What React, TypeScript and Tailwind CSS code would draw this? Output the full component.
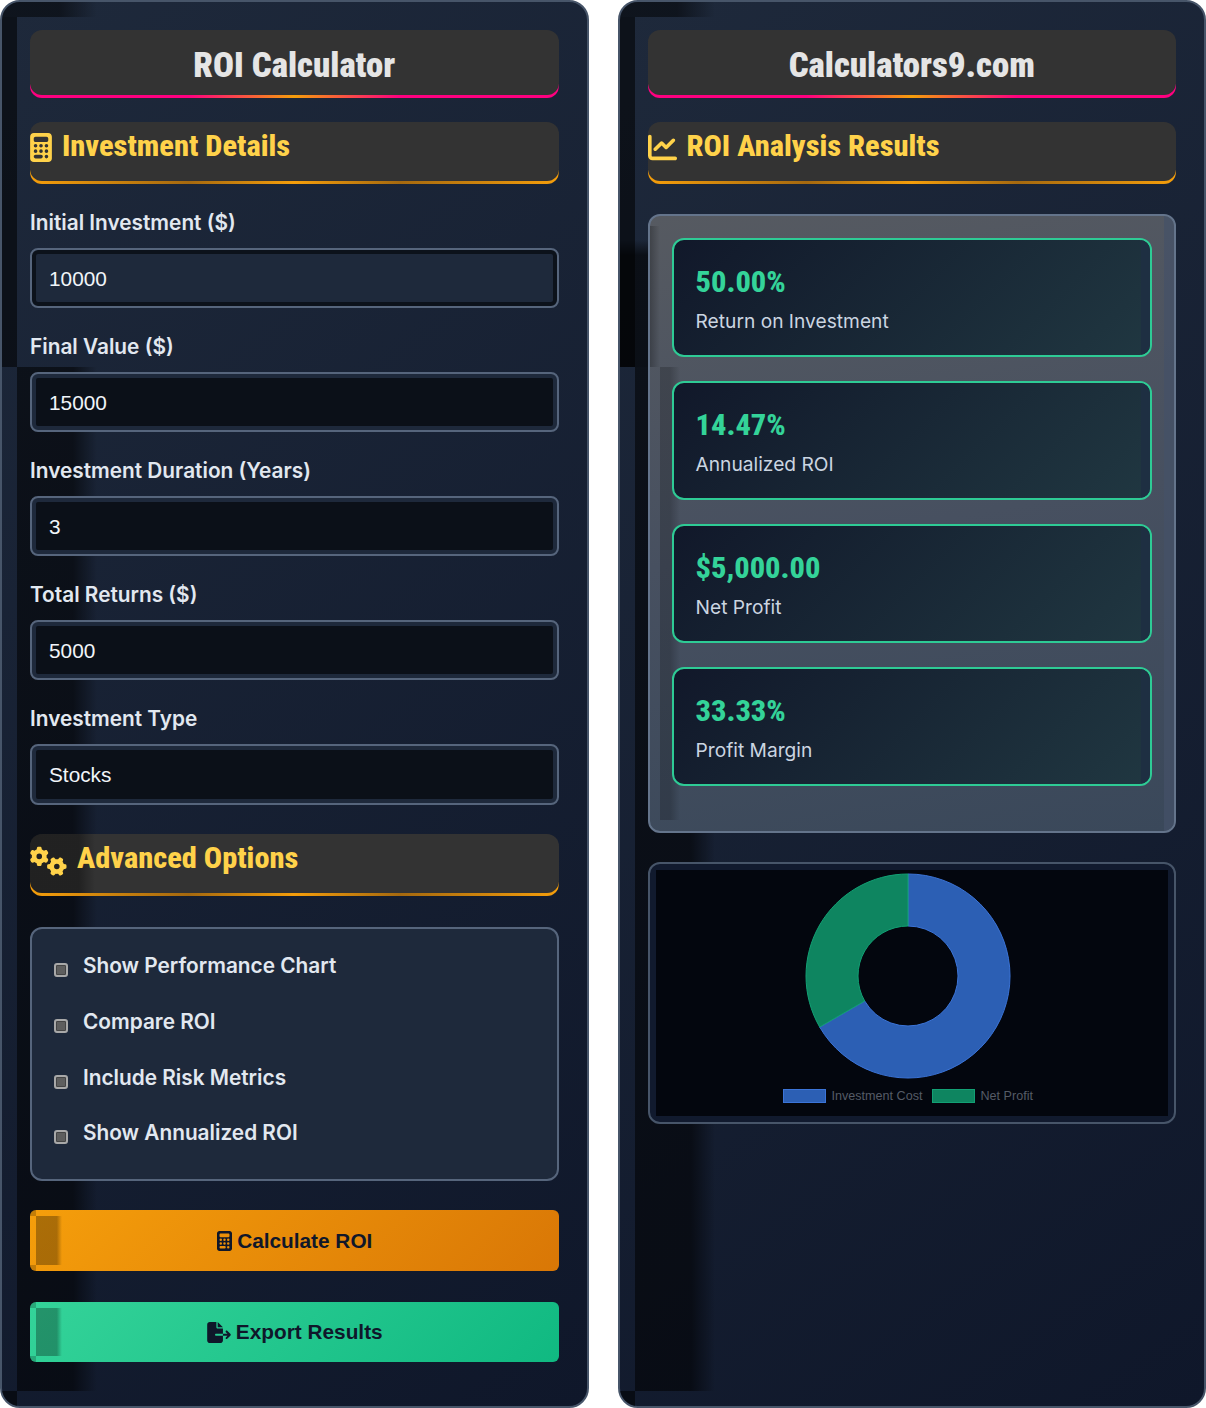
import type { ReactNode } from "react";
import { FaCalculator, FaChartLine, FaFileExport, FaGears } from "react-icons/fa6";

const fields = [
  { label: "Initial Investment ($)", value: "10000", first: true },
  { label: "Final Value ($)", value: "15000" },
  { label: "Investment Duration (Years)", value: "3" },
  { label: "Total Returns ($)", value: "5000" },
];

const options = ["Show Performance Chart", "Compare ROI", "Include Risk Metrics", "Show Annualized ROI"];

const results = [
  { value: "50.00%", label: "Return on Investment" },
  { value: "14.47%", label: "Annualized ROI" },
  { value: "$5,000.00", label: "Net Profit" },
  { value: "33.33%", label: "Profit Margin" },
];

const condensed = "font-['Roboto_Condensed',Roboto,sans-serif]";

// the odd dark inset shadow pieces of the original panels
function PanelShade() {
  return (
    <>
      <div className="pointer-events-none absolute left-0 top-0 h-[15px] w-[95px] bg-[linear-gradient(90deg,rgba(0,0,0,0.5)_60%,transparent)]" />
      <div className="pointer-events-none absolute left-0 top-[15px] h-[350px] w-[15px] bg-black/55" />
      <div className="pointer-events-none absolute bottom-[15px] left-[15px] top-[365px] w-[80px] bg-[linear-gradient(90deg,rgba(0,0,0,0.55)_70%,transparent)]" />
      <div className="pointer-events-none absolute bottom-0 left-0 h-[15px] w-[15px] bg-black/55" />
    </>
  );
}

function Panel({ children }: { children: ReactNode }) {
  return (
    <div className="relative overflow-hidden rounded-[20px] border-2 border-[#475569] bg-[linear-gradient(145deg,#1e293b,#0f172a)]">
      <PanelShade />
      <div className="relative flex flex-col p-[28px]">{children}</div>
    </div>
  );
}

function Title({ children }: { children: ReactNode }) {
  return (
    <div className="rounded-xl bg-[linear-gradient(90deg,#ff0080,#ff0080_30%,#f59e0b_50%,#ff0080_70%,#ff0080)] bg-[length:100%_14px] bg-bottom bg-no-repeat pb-[3px]">
      <div className="flex h-[65px] items-center justify-center rounded-xl bg-[#333333] pt-[5px]">
        <h1 className={`${condensed} text-[34.8px] font-black leading-none text-[#e5e5e5]`}>{children}</h1>
      </div>
    </div>
  );
}

function Section({ icon, children, shaded }: { icon: ReactNode; children: ReactNode; shaded?: boolean }) {
  return (
    <div className="rounded-xl bg-[linear-gradient(90deg,#f59e0b,#a5690f_30%,#f59e0b_50%,#a5690f_70%,#f59e0b)] bg-[length:100%_14px] bg-bottom bg-no-repeat pb-[3px]">
      <div className="relative flex h-[59px] items-start gap-[10px] overflow-hidden rounded-xl bg-[#333333] pt-[6px]">
        {shaded && (
          <div className="absolute inset-y-0 left-0 w-[65px] bg-[linear-gradient(90deg,rgba(0,0,0,0.35)_75%,transparent)]" />
        )}
        <span className="relative text-[#ffd24a]">{icon}</span>
        <h2 className={`${condensed} relative text-[30.4px] font-extrabold leading-[36px] text-[#ffd24a]`}>{children}</h2>
      </div>
    </div>
  );
}

function Field({ label, value, first }: { label: string; value: string; first?: boolean }) {
  return (
    <div className="mb-[25px] flex flex-col">
      <label className="mb-[13px] h-[26px] text-[20.8px] font-semibold leading-[28px] text-[#e2e8f0]">{label}</label>
      <div className={`h-[60px] rounded-lg border-2 border-[#56657c] p-[4px] ${first ? "bg-[#0c121b]" : "bg-[#1e293b]"}`}>
        <input
          readOnly
          value={value}
          className={`h-full w-full rounded-[2px] px-[13px] pt-[2px] font-['Liberation_Sans',sans-serif] text-[20.8px] text-[#f1f5f9] outline-none ${first ? "bg-[#1e293b]" : "bg-[#0b1018]"}`}
        />
      </div>
    </div>
  );
}

function Checkbox() {
  return (
    <input
      type="checkbox"
      readOnly
      className="mt-[9px] h-[14px] w-[14px] appearance-none rounded-[3px] border-2 border-[#a8a8a8] bg-[#5e5e5e] shadow-[inset_0_0_0_1px_#444444]"
    />
  );
}

function ActionButton({ className, icon, children }: { className: string; icon: ReactNode; children: ReactNode }) {
  return (
    <button className={`relative flex w-full items-center justify-center gap-[4px] overflow-hidden rounded-md font-['Liberation_Sans',sans-serif] text-[20.8px] font-bold text-[#0f172a] ${className}`}>
      <span className="absolute inset-y-[6px] left-[6px] w-[26px] bg-[linear-gradient(90deg,rgba(0,0,0,0.3)_80%,transparent)]" />
      <span className="absolute left-0 top-0 h-[6px] w-[6px] bg-black/20" />
      <span className="absolute bottom-0 left-0 h-[6px] w-[6px] bg-black/20" />
      {icon}
      {children}
    </button>
  );
}

function Donut() {
  return (
    <svg width="208" height="208" viewBox="-104 -104 208 208">
      <path
        d="M0 -102 A102 102 0 1 1 -88.33 51 L-43.3 25 A50 50 0 1 0 0 -50 Z"
        fill="#2c5fb4"
        stroke="#3b74d8"
        strokeWidth="1"
      />
      <path
        d="M-88.33 51 A102 102 0 0 1 0 -102 L0 -50 A50 50 0 0 0 -43.3 25 Z"
        fill="#0e8560"
        stroke="#12a074"
        strokeWidth="1"
      />
    </svg>
  );
}

export default function App() {
  return (
    <div className="grid h-[1408px] grid-cols-2 gap-[29px] bg-white font-['Inter',sans-serif]">
      <Panel>
        <Title>ROI Calculator</Title>
        <div className="mt-[24px]">
          <Section icon={<FaCalculator className="mt-[5px] h-[29px] w-[22px]" />}>Investment Details</Section>
        </div>
        <div className="mt-[25px] flex flex-col">
          {fields.map((f) => (
            <Field key={f.label} {...f} />
          ))}
          <div className="mb-[29px] flex flex-col">
            <label className="mb-[13px] h-[26px] text-[20.8px] font-semibold leading-[28px] text-[#e2e8f0]">Investment Type</label>
            <div className="h-[61px] rounded-lg border-2 border-[#56657c] bg-[#1e293b] p-[4px]">
              <select className="h-full w-full appearance-none rounded-[2px] bg-[#0b1018] px-[13px] font-['Liberation_Sans',sans-serif] text-[20.8px] text-[#f1f5f9] outline-none">
                <option>Stocks</option>
              </select>
            </div>
          </div>
        </div>
        <Section shaded icon={<FaGears className="mt-[6px] h-[30px] w-[37px]" />}>
          Advanced Options
        </Section>
        <div className="mt-[31px] flex h-[254px] flex-col rounded-xl border-2 border-[#56657c] bg-[#1e293b] px-[22px] pt-[9px]">
          {options.map((o) => (
            <div key={o} className="flex h-[55.7px] items-center gap-[15px]">
              <Checkbox />
              <span className="text-[20.8px] font-semibold text-[#e2e8f0]">{o}</span>
            </div>
          ))}
        </div>
        <div className="mt-[29px] flex flex-col gap-[31px]">
          <ActionButton className="h-[61px] bg-[linear-gradient(135deg,#f59e0b,#d97706)]" icon={<FaCalculator className="h-[20px] w-[17px]" />}>
            Calculate ROI
          </ActionButton>
          <ActionButton className="h-[60px] bg-[linear-gradient(135deg,#34d399,#10b981)]" icon={<FaFileExport className="h-[21px] w-[26px]" />}>
            Export Results
          </ActionButton>
        </div>
      </Panel>

      <Panel>
        <Title>Calculators9.com</Title>
        <div className="mt-[24px]">
          <Section icon={<FaChartLine className="mt-[5px] h-[29px] w-[29px]" />}>ROI Analysis Results</Section>
        </div>
        <div className="absolute left-0 top-[238px] h-[127px] w-[28px] bg-[linear-gradient(180deg,transparent,rgba(0,0,0,0.6)_15px)]" />
        <div className="relative mt-[30px] flex h-[619px] flex-col gap-[24px] overflow-hidden rounded-xl border-2 border-[#64748b] bg-[linear-gradient(170deg,#565a61,#475060_50%,#3a485a)] px-[22px] pt-[22px]">
          <div className="absolute left-0 top-[10px] h-[141px] w-[10px] bg-[linear-gradient(90deg,rgba(0,0,0,0.25),transparent)]" />
          <div className="absolute left-[10px] top-[151px] h-[453px] w-[20px] bg-[linear-gradient(90deg,rgba(0,0,0,0.2)_50%,transparent)]" />
          <div className="absolute inset-y-0 right-0 w-[10px] bg-[#445168]/70" />
          {results.map((r) => (
            <div
              key={r.label}
              className="relative flex h-[119px] shrink-0 flex-col overflow-hidden rounded-xl border-2 border-[#2ecb95] bg-[linear-gradient(135deg,#11182a,#203741)] px-[22px] pt-[22px]"
            >
              <div className="absolute inset-y-0 right-0 w-[9px] bg-[#1e2f42]" />
              <div className={`${condensed} relative text-[30.4px] font-extrabold leading-[40px] text-[#34d399]`}>{r.value}</div>
              <div className="relative mt-[6px] text-[19.2px] leading-[26px] text-[#cbd5e1]">{r.label}</div>
            </div>
          ))}
        </div>
        <div className="mt-[29px] h-[262px] rounded-xl border-2 border-[#475569] bg-[#111a2e] p-[6px]">
          <div className="flex h-full flex-col items-center bg-[#03060e] pr-[8px] pt-[2px]">
            <Donut />
            <div className="mt-[7px] flex items-center font-['Liberation_Sans',sans-serif] text-[12.6px] text-[#555b66]">
              <span className="h-[14px] w-[43px] border border-[#3b74d8] bg-[#2c5fb4]" />
              <span className="ml-[6px]">Investment Cost</span>
              <span className="ml-[9px] h-[14px] w-[43px] border border-[#12a074] bg-[#0e8560]" />
              <span className="ml-[6px]">Net Profit</span>
            </div>
          </div>
        </div>
      </Panel>
    </div>
  );
}
